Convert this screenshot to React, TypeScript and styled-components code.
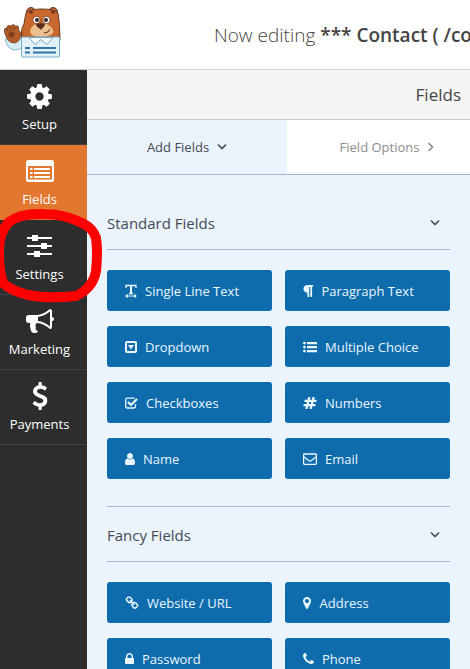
import React from 'react';
import styled, { createGlobalStyle } from 'styled-components';

const GlobalStyle = createGlobalStyle`
  *, *::before, *::after { box-sizing: border-box; }
  body {
    margin: 0;
    background: #ebf3fc;
    font-family: "Open Sans", "Noto Sans", sans-serif;
    color: #444;
    overflow: hidden;
  }
  button { font: inherit; border: 0; margin: 0; cursor: pointer; }
`;

/* ---------- icons ---------- */

const paths = {
  cog: 'M1152 896q0-106-75-181t-181-75-181 75-75 181 75 181 181 75 181-75 75-181zm512-109v222q0 12-8 23t-20 13l-185 28q-19 54-39 91 35 50 107 138 10 12 10 25t-9 23q-27 37-99 108t-94 71q-12 0-26-9l-138-108q-44 23-91 38-16 136-29 186-7 28-36 28h-222q-14 0-24.5-8.5t-11.5-21.5l-28-184q-49-16-90-37l-141 107q-10 9-25 9-14 0-25-11-126-114-165-168-7-10-7-23 0-12 8-23 15-21 51-66.5t54-70.5q-27-50-41-99l-183-27q-13-2-21-12.5t-8-23.5v-222q0-12 8-23t19-13l186-28q14-46 39-92-40-57-107-138-10-12-10-24 0-10 9-23 26-36 98.5-107.5t94.5-71.5q13 0 26 10l138 107q44-23 91-38 16-136 29-186 7-28 36-28h222q14 0 24.5 8.5t11.5 21.5l28 184q49 16 90 37l142-107q9-9 24-9 13 0 25 10 129 119 165 170 7 8 7 22 0 12-8 23-15 21-51 66.5t-54 70.5q26 50 41 98l183 28q13 2 21 12.5t8 23.5z',
  bullhorn: 'M1664 640q53 0 90.5 37.5t37.5 90.5-37.5 90.5-90.5 37.5v384q0 52-38 90t-90 38q-417-347-812-380-58 19-91 66t-31 100.5 40 92.5q-20 33-23 65.5t6 58 33.5 55 48 50 61.5 50.5q-29 58-111.5 83t-168.5 11.5-132-55.5q-7-23-29.5-87.5t-32-94.5-23-89-15-101 3.5-98.5 22-110.5h-122q-66 0-113-47t-47-113v-192q0-66 47-113t113-47h480q435 0 896-384 52 0 90 38t38 90v384zm-128 604v-954q-394 302-768 343v270q377 42 768 341z',
  dollar: 'M1362 1185q0 153-99.5 263.5t-258.5 136.5v175q0 14-9 23t-23 9h-135q-13 0-22.5-9.5t-9.5-22.5v-175q-66-9-127.5-31t-101.5-44.5-74-48-46.5-37.5-17.5-18q-17-21-2-41l103-135q7-10 23-12 15-2 24 9l2 2q113 99 243 125 37 8 74 8 81 0 142.5-43t61.5-122q0-28-15-53t-33.5-42-58.5-37.5-66-32-80-32.5q-39-16-61.5-25t-61.5-26.5-62.5-31-56.5-35.5-53.5-42.5-43.5-49-35.5-58-21-66.5-8.5-78q0-138 98-242t255-134v-180q0-13 9.5-22.5t22.5-9.5h135q14 0 23 9t9 23v176q57 6 110.5 23t87 33.5 63.5 37.5 39 29 15 14q17 18 5 38l-81 146q-8 15-23 16-14 3-27-7-3-3-14.5-12t-39-26.5-58.5-32-74.5-26-85.5-11.5q-95 0-155 43t-60 111q0 26 8.5 48t29.5 41.5 39.5 33 56 31 60.5 27 70 27.5q53 20 81 31.5t76 35 75.5 42.5 62 50 53 63.5 31.5 76.5 13 94z',
  marker: 'M1152 640q0-106-75-181t-181-75-181 75-75 181 75 181 181 75 181-75 75-181zm256 0q0 109-33 179l-364 774q-16 33-47.5 52t-67.5 19-67.5-19-46.5-52l-365-774q-33-70-33-179 0-212 150-362t362-150 362 150 150 362z',
  lock: 'M640 768h512v-192q0-106-75-181t-181-75-181 75-75 181v192zm832 96v576q0 40-28 68t-68 28h-960q-40 0-68-28t-28-68v-576q0-40 28-68t68-28h32v-192q0-184 132-316t316-132 316 132 132 316v192h32q40 0 68 28t28 68z',
  user: 'M1536 1399q0 109-62.5 187t-150.5 78h-854q-88 0-150.5-78t-62.5-187q0-85 8.5-160.5t31.5-152 58.5-131 94-89 134.5-34.5q131 128 313 128t313-128q76 0 134.5 34.5t94 89 58.5 131 31.5 152 8.5 160.5zm-256-887q0 159-112.5 271.5t-271.5 112.5-271.5-112.5-112.5-271.5 112.5-271.5 271.5-112.5 271.5 112.5 112.5 271.5z',
  phone: 'M1600 1240q0 27-10 70.5t-21 68.5q-21 50-122 106-94 51-186 51-27 0-52.5-3.5t-57.5-12.5-47.5-14.5-55.5-20.5-49-18q-98-35-175-83-128-79-264.5-215.5t-215.5-264.5q-48-77-83-175-3-9-18-49t-20.5-55.5-14.5-47.5-12.5-57.5-3.5-52.5q0-92 51-186 56-101 106-122 25-11 68.5-21t70.5-10q14 0 21 3 18 6 53 76 11 19 30 54t35 63.5 31 53.5q3 4 17.5 25t21.5 35.5 7 28.5q0 20-28.5 50t-62 55-62 53-28.5 46q0 9 5 22.5t8.5 20.5 14 24 11.5 19q76 137 174 235t235 174q2 1 19 11.5t24 14 20.5 8.5 22.5 5q18 0 46-28.5t53-62 55-62 50-28.5q14 0 28.5 7t35.5 21.5 25 17.5q25 15 53.5 31t63.5 35 54 30q70 35 76 53 3 7 3 21z',
  link: 'M1520 1216q0-40-28-68l-208-208q-28-28-68-28-42 0-72 32 3 3 19 18.5t21.5 21.5 15 19 13 25.5 3.5 27.5q0 40-28 68t-68 28q-15 0-27.5-3.5t-25.5-13-19-15-21.5-21.5-18.5-19q-33 31-33 73 0 40 28 68l206 207q27 27 68 27 40 0 68-26l147-146q28-28 28-67zm-703-705q0-40-28-68l-206-207q-28-28-68-28-39 0-68 27l-147 146q-28 28-28 67 0 40 28 68l208 208q27 27 68 27 42 0 72-31-3-3-19-18.5t-21.5-21.5-15-19-13-25.5-3.5-27.5q0-40 28-68t68-28q15 0 27.5 3.5t25.5 13 19 15 21.5 21.5 18.5 19q33-31 33-73zm895 705q0 120-85 203l-147 146q-83 83-203 83-121 0-204-85l-206-207q-83-83-83-203 0-123 88-209l-88-88q-86 88-208 88-120 0-204-84l-208-208q-84-84-84-204t85-203l147-146q83-83 203-83 121 0 204 85l206 207q83 83 83 203 0 123-88 209l88 88q86-88 208-88 120 0 204 84l208 208q84 84 84 204z',
  hash: 'M991 1024l64-256h-254l-64 256h254zm768-504l-56 224q-7 24-31 24h-327l-64 256h311q15 0 25 12 10 14 6 28l-56 224q-5 24-31 24h-327l-81 328q-7 24-31 24h-224q-16 0-26-12-9-12-6-28l78-312h-254l-81 328q-7 24-31 24h-225q-15 0-25-12-9-12-6-28l78-312h-311q-15 0-25-12-9-12-6-28l56-224q7-24 31-24h327l64-256h-311q-15 0-25-12-10-14-6-28l56-224q5-24 31-24h327l81-328q7-24 32-24h224q15 0 25 12 9 12 6 28l-78 312h254l81-328q7-24 32-24h224q15 0 25 12 9 12 6 28l-78 312h311q15 0 25 12 9 12 6 28z',
  paragraph: 'M1534 189v73q0 29-18.5 61t-42.5 32q-50 0-54 1-26 6-32 31-3 11-3 64v1152q0 25-18 43t-43 18h-108q-25 0-43-18t-18-43v-1218h-143v1218q0 25-17.5 43t-43.5 18h-108q-26 0-43.5-18t-17.5-43v-496q-147-12-245-59-126-58-192-179-64-117-64-259 0-166 88-286 88-118 209-159 111-37 417-37h479q25 0 43 18t18 43z',
};

type SolidName = keyof typeof paths;

/* Solid glyphs share a 1792-unit square; x and w trim it to the glyph's own advance. */
const Solid = ({ name, size, x = 0, w = 1792 }: { name: SolidName; size: number; x?: number; w?: number }) => (
  <svg width={(size * w) / 1792} height={size} viewBox={`${x} 0 ${w} 1792`} fill="currentColor" aria-hidden="true">
    <path d={paths[name]} />
  </svg>
);

const ListAltIcon = () => (
  <svg width="28" height="22" viewBox="0 0 28 22" aria-hidden="true">
    <path fill="currentColor" fillRule="evenodd" d="M2.5 0h23A2.5 2.5 0 0 1 28 2.500v17a2.500 2.500 0 0 1-2.500 2.500h-23A2.500 2.500 0 0 1 0 19.500v-17A2.500 2.500 0 0 1 2.500 0zM2 6v13.500h24V6z" />
    <path stroke="currentColor" strokeWidth="2" d="M4 9h2.500M8 9h16M4 13h2.500M8 13h16M4 17h2.500M8 17h16" />
  </svg>
);

const SlidersIcon = () => (
  <svg width="25" height="22" viewBox="0 0 25 22" aria-hidden="true">
    <path stroke="currentColor" strokeWidth="2" d="M0 3h25M0 11h25M0 19h25" />
    <path fill="currentColor" d="M5 0h6v6H5zM14 8h6v6h-6zM7 16h6v6H7z" />
  </svg>
);

const TextWidthIcon = () => (
  <svg width="12" height="14" viewBox="0 0 12 14" fill="none" stroke="currentColor" aria-hidden="true">
    <path d="M1 4V1.500h10V4M6 1.500v8M4 9.500h4" strokeWidth="1.300" />
    <path d="M5.500 1.500v8h1v-8z" strokeWidth="1" />
    <path d="M1 12h10M2.500 10.500L1 12l1.500 1.500M9.500 10.500L11 12l-1.500 1.500" strokeWidth="1.100" />
  </svg>
);

const CaretSquareIcon = () => (
  <svg width="12" height="14" viewBox="0 0 12 14" aria-hidden="true">
    <rect x="1" y="2" width="10" height="10" rx="1" fill="none" stroke="currentColor" strokeWidth="2" />
    <path fill="currentColor" d="M3 5h6L6 9.500z" />
  </svg>
);

const ListIcon = () => (
  <svg width="14" height="14" viewBox="0 0 14 14" fill="currentColor" aria-hidden="true">
    <path d="M4 2h10v2.200H4zM4 6h10v2.200H4zM4 10h10v2.200H4z" />
    <circle cx="1.400" cy="3.100" r="1.400" />
    <circle cx="1.400" cy="7.100" r="1.400" />
    <circle cx="1.400" cy="11.100" r="1.400" />
  </svg>
);

const CheckSquareIcon = () => (
  <svg width="13" height="14" viewBox="0 0 13 14" fill="none" stroke="currentColor" aria-hidden="true">
    <path d="M10.500 8v2.500a1.500 1.500 0 0 1-1.500 1.500H2.200A1.500 1.500 0 0 1 .7 10.500V3.700A1.500 1.500 0 0 1 2.200 2.200H9.500" strokeWidth="1.300" />
    <path d="M3 6l3 3 6-6" strokeWidth="2.200" />
  </svg>
);

const EnvelopeIcon = () => (
  <svg width="14" height="14" viewBox="0 0 14 14" fill="none" stroke="currentColor" strokeWidth="1.300" aria-hidden="true">
    <rect x=".6" y="2" width="12.800" height="10.400" rx="1" />
    <path d="M.8 4.800L5.600 8.500q1.400 1 2.800 0l4.800-3.700" />
  </svg>
);

const Chevron = ({ right = false }: { right?: boolean }) => (
  <svg width={right ? 7 : 10} height="10" viewBox={right ? '0 0 7 10' : '0 0 10 10'} fill="none" stroke="currentColor" strokeWidth="1.600" aria-hidden="true">
    <path d={right ? 'M1.500 1l4 4-4 4' : 'M1 2.500l4 4 4-4'} />
  </svg>
);

const BearLogo = () => (
  <svg width="60" height="56" viewBox="0 0 60 56" role="img" aria-label="WPForms">
    {/* ears and head */}
    <g stroke="#6e3a22" strokeWidth="1">
      <circle cx="27" cy="7" r="4.500" fill="#b4602e" />
      <circle cx="49" cy="7" r="4.500" fill="#b4602e" />
      <path fill="#c9672c" d="M22 8q5-4 16-4t16 4q2 11 2 27.500h-38Q16 25 20 19q1-7 2-11z" />
    </g>
    <circle cx="27" cy="7" r="2" fill="#7a3d22" />
    <circle cx="49" cy="7" r="2" fill="#7a3d22" />
    <path fill="#b65a27" d="M18 26q4 8 19 9t18-7v8H18z" />
    {/* face */}
    <path fill="#ecc08c" d="M28 22q3-4 9-4t10 4q4 4 1 7-4 3-11 3t-10-3q-2-4 1-7z" />
    <circle cx="32.500" cy="15" r="3.600" fill="#fff" stroke="#6e3a22" strokeWidth=".7" />
    <circle cx="42.500" cy="15" r="3.600" fill="#fff" stroke="#6e3a22" strokeWidth=".7" />
    <circle cx="33" cy="15" r="2" fill="#322522" />
    <circle cx="42" cy="15" r="2" fill="#322522" />
    <path fill="#5b2b1d" d="M32 19q4.500-2 9 0 0 3-4.500 5-4.500-2-4.500-5z" />
    <path fill="none" stroke="#5b2b1d" strokeWidth="1" d="M37 23v2M40 28q5 0 6-4" />
    {/* raised arm */}
    <path fill="#d7ebf4" stroke="#83b6ce" d="M1.500 34q1 10 9 11 5 0 8-3v-8l-5-1z" />
    <path fill="#b45c28" stroke="#703a20" strokeWidth=".8" d="M4 35Q1 30 .5 27q-1-4 2-4 1-4 4-2 3-3 5 0 4-1 3 4 3 2 2 6-1 6-6 7-4 0-6.500-3z" />
    <circle cx="7.500" cy="29.500" r="3" fill="#813e20" />
    <path fill="none" stroke="#703a20" strokeWidth="1" d="M2.500 23l1.500 3M6.500 21.500v3M11 22l-1 3" />
    {/* form card */}
    <rect x="17.500" y="32" width="38" height="20" rx="1" fill="#e2f1f8" stroke="#78adc6" />
    <path fill="#f8fcfe" stroke="#79a9bb" d="M25 32.500l6 7 6-5 6 5 6-7z" />
    <path stroke="#2d75a9" strokeWidth="2" d="M21 43h5M29 43h23M21 47.500h5M29 47.500h23" />
  </svg>
);

/* ---------- layout ---------- */

const Builder = styled.div`
  display: flex;
  flex-direction: column;
  height: 100vh;
  overflow: hidden;
`;

const TopBar = styled.header`
  flex: none;
  display: flex;
  align-items: center;
  height: 70px;
  padding-left: 4px;
  background: #fff;
  border-bottom: 1px solid #cfd2d5;
  overflow: hidden;
`;

const LogoSlot = styled.div`
  flex: none;
  width: 210px;
  height: 60px;
`;

const FormTitle = styled.h1`
  margin: 0;
  font-size: 19px;
  line-height: 28px;
  font-weight: 300;
  white-space: nowrap;
  strong { font-weight: 600; }
`;

const Workspace = styled.div`
  flex: 1;
  display: flex;
  min-height: 0;
`;

const Sidebar = styled.nav`
  flex: none;
  width: 87px;
  background: #2d2d2d;
`;

const SidebarButton = styled.button<{ $active?: boolean }>`
  position: relative;
  display: flex;
  flex-direction: column;
  align-items: center;
  gap: 4px;
  width: 100%;
  height: 75px;
  padding: 12px 8px 0 0;
  color: #fff;
  background: ${(p) => (p.$active ? '#e27730' : '#2d2d2d')};
  border-bottom: 1px solid ${(p) => (p.$active ? '#e27730' : '#404040')};
  font-size: 13px;
  line-height: 20px;
`;

const SidebarIcon = styled.span`
  display: flex;
  align-items: center;
  justify-content: center;
  height: 28px;
`;

const Marker = styled.svg`
  position: absolute;
  z-index: 2;
  left: -5px;
  top: -14px;
  overflow: visible;
  pointer-events: none;
`;

const Panel = styled.main`
  flex: 1;
  min-width: 0;
  overflow: hidden;
`;

const PanelHeader = styled.h2`
  margin: 0;
  height: 50px;
  padding-right: 9px;
  background: #f5f5f5;
  border-bottom: 1px solid #c5ccd5;
  font-size: 17px;
  line-height: 49px;
  font-weight: 400;
  text-align: right;
`;

const Tabs = styled.div`
  display: grid;
  grid-template-columns: 200px minmax(200px, 1fr);
  height: 55px;
`;

const Tab = styled.button<{ $active?: boolean }>`
  display: flex;
  align-items: center;
  justify-content: center;
  gap: 8px;
  padding: 0;
  background: ${(p) => (p.$active ? '#ebf3fc' : '#fff')};
  color: ${(p) => (p.$active ? '#444b55' : '#8c8c8c')};
  border-bottom: 1px solid #a9b6c9;
  font-size: 13px;
`;

const Groups = styled.div`
  padding: 20px 20px 0;
`;

const Group = styled.section`
  padding-bottom: 27px;
  border-bottom: 1px solid #a9b6c9;
`;

const GroupTitle = styled.h3`
  margin: 0 0 20px;
  border-bottom: 1px solid #a9b6c9;
  font-weight: 400;
`;

const GroupToggle = styled.button`
  display: flex;
  align-items: center;
  justify-content: space-between;
  width: 100%;
  height: 54px;
  padding: 2px 10px 0 0;
  background: none;
  color: #444b55;
  font-size: 15px;
  text-align: left;
`;

const FieldGrid = styled.div`
  display: grid;
  grid-template-columns: 1fr 1fr;
  gap: 15px 13px;
`;

const FieldButton = styled.button`
  display: flex;
  align-items: center;
  gap: 8px;
  height: 41px;
  padding: 0 0 0 18px;
  border-radius: 3px;
  background: #0e6cad;
  color: #eaf6ff;
  font-size: 13px;
  white-space: nowrap;
`;

type Field = { label: string; icon: React.ReactNode };

const standard: Field[] = [
  { label: 'Single Line Text', icon: <TextWidthIcon /> },
  { label: 'Paragraph Text', icon: <Solid name="paragraph" size={14} x={220} w={1330} /> },
  { label: 'Dropdown', icon: <CaretSquareIcon /> },
  { label: 'Multiple Choice', icon: <ListIcon /> },
  { label: 'Checkboxes', icon: <CheckSquareIcon /> },
  { label: 'Numbers', icon: <Solid name="hash" size={14} /> },
  { label: 'Name', icon: <Solid name="user" size={14} x={256} w={1280} /> },
  { label: 'Email', icon: <EnvelopeIcon /> },
];

const fancy: Field[] = [
  { label: 'Website / URL', icon: <Solid name="link" size={14} /> },
  { label: 'Address', icon: <Solid name="marker" size={14} x={384} w={1100} /> },
  { label: 'Password', icon: <Solid name="lock" size={14} x={320} w={1152} /> },
  { label: 'Phone', icon: <Solid name="phone" size={14} x={192} w={1408} /> },
];

const FieldGroup = ({ title, fields }: { title: string; fields: Field[] }) => (
  <Group>
    <GroupTitle>
      <GroupToggle type="button" aria-expanded="true">
        {title}
        <Chevron />
      </GroupToggle>
    </GroupTitle>
    <FieldGrid>
      {fields.map((f) => (
        <FieldButton type="button" key={f.label}>
          {f.icon}
          {f.label}
        </FieldButton>
      ))}
    </FieldGrid>
  </Group>
);

const HandDrawnCircle = () => (
  <Marker width="110" height="100" viewBox="-5 206 110 100" fill="none" stroke="#fe0000" strokeWidth="10" strokeLinecap="round" strokeLinejoin="round" aria-hidden="true">
    <path d="M82 223Q64 214 44 214 20 213 9 222-1 232-1 250-1 276 4 284 12 291 28 295q20 4 48 1 17-8 20-25 2-20 0-33-3-10-14-15" />
  </Marker>
);

export default function App() {
  return (
    <>
      <GlobalStyle />
      <Builder>
        <TopBar>
          <LogoSlot><BearLogo /></LogoSlot>
          <FormTitle>Now editing <strong>*** Contact ( /co</strong></FormTitle>
        </TopBar>
        <Workspace>
          <Sidebar aria-label="Form builder">
            <SidebarButton type="button"><SidebarIcon><Solid name="cog" size={29} /></SidebarIcon>Setup</SidebarButton>
            <SidebarButton type="button" $active><SidebarIcon><ListAltIcon /></SidebarIcon>Fields</SidebarButton>
            <SidebarButton type="button"><SidebarIcon><SlidersIcon /></SidebarIcon>Settings<HandDrawnCircle /></SidebarButton>
            <SidebarButton type="button"><SidebarIcon><Solid name="bullhorn" size={28} /></SidebarIcon>Marketing</SidebarButton>
            <SidebarButton type="button"><SidebarIcon><Solid name="dollar" size={28} /></SidebarIcon>Payments</SidebarButton>
          </Sidebar>
          <Panel>
            <PanelHeader>Fields</PanelHeader>
            <Tabs>
              <Tab type="button" $active>Add Fields <Chevron /></Tab>
              <Tab type="button">Field Options <Chevron right /></Tab>
            </Tabs>
            <Groups>
              <FieldGroup title="Standard Fields" fields={standard} />
              <FieldGroup title="Fancy Fields" fields={fancy} />
            </Groups>
          </Panel>
        </Workspace>
      </Builder>
    </>
  );
}
